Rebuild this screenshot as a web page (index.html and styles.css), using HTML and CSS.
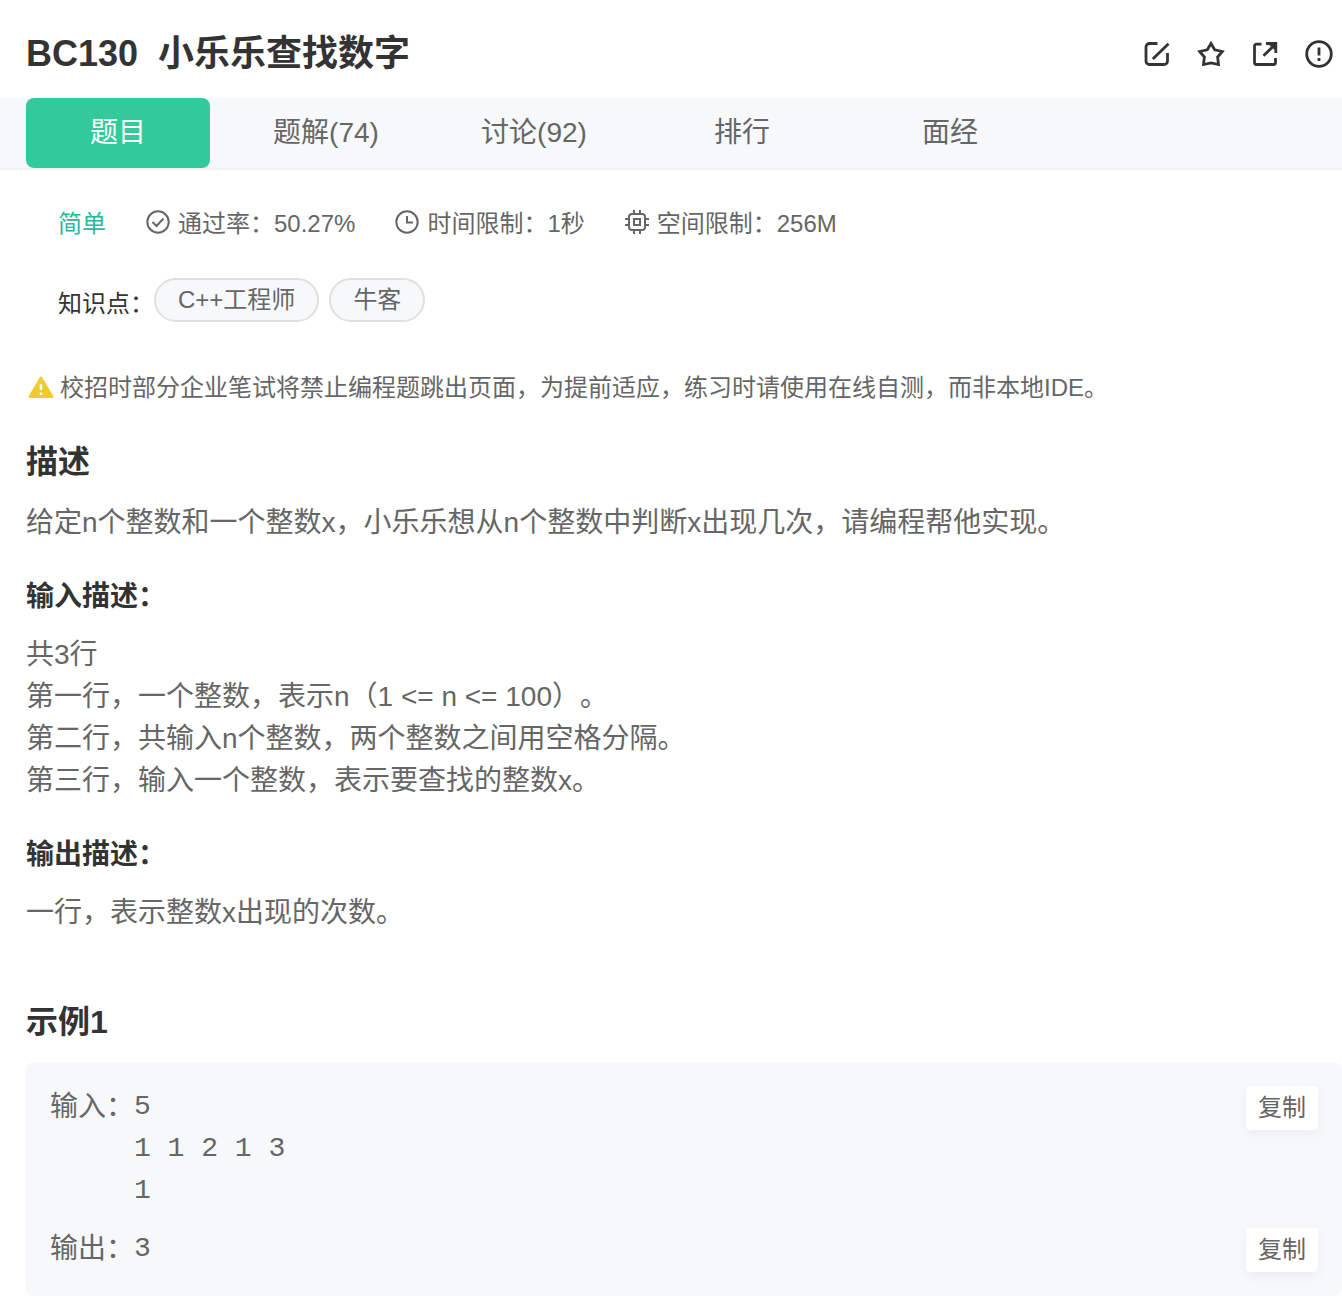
FILE: index.html
```html
<!DOCTYPE html>
<html lang="zh-CN">
<head>
<meta charset="utf-8">
<title>BC130 小乐乐查找数字</title>
<link rel="stylesheet" href="styles.css">
</head>
<body>
<header class="header">
  <h1 class="title"><span>BC130</span><span>小乐乐查找数字</span></h1>
  <div class="actions">
    <button class="icon-button" type="button" aria-label="笔记"><svg viewBox="0 0 28 28"><path d="M14.5 3.5H6.5a3.5 3.5 0 0 0-3.5 3.500v14a3.500 3.500 0 0 0 3.500 3.500h14.500a3.500 3.500 0 0 0 3.500-3.500V13M9.800 19 25.500 3.800"/></svg></button>
    <button class="icon-button" type="button" aria-label="收藏"><svg viewBox="0 0 28 28"><path d="m14 3.500 3.700 6.300 7.600 1.700-4.700 5.500.9 7.500-7.500-1.600-7.500 1.600.9-7.500-4.700-5.500 7.600-1.700z"/></svg></button>
    <button class="icon-button" type="button" aria-label="分享"><svg viewBox="0 0 28 28"><path d="M10.500 4.200H5.500a2 2 0 0 0-2 2v16.300a2 2 0 0 0 2 2h17a2 2 0 0 0 2-2V18M15 3.500H24.800V13M12.500 15.800 24 4.500"/><path class="arrow-head" d="M17 4H25V11z"/></svg></button>
    <button class="icon-button" type="button" aria-label="反馈"><svg viewBox="0 0 28 28"><circle cx="14" cy="14" r="12.300"/><path d="M14 7.500v8M14 18v3"/></svg></button>
  </div>
</header>
<nav class="tabs">
  <a class="tab tab-active" href="#problem">题目</a>
  <a class="tab" href="#solutions">题解(74)</a>
  <a class="tab" href="#discuss">讨论(92)</a>
  <a class="tab" href="#rank">排行</a>
  <a class="tab" href="#interview">面经</a>
</nav>
<main class="content" id="problem">
  <div class="meta">
    <span class="level">简单</span>
    <span class="meta-item"><svg viewBox="0 0 24 24"><circle cx="12" cy="12" r="10.700"/><path d="m6.500 12 4 4 7-7.500"/></svg>通过率：50.27%</span>
    <span class="meta-item"><svg viewBox="0 0 24 24"><circle cx="12" cy="12" r="10.700"/><path d="M12 6v6.500h6"/></svg>时间限制：1秒</span>
    <span class="meta-item"><svg viewBox="0 0 24 24"><rect x="4" y="4" width="16" height="16" rx="3"/><rect x="9" y="9" width="6" height="6"/><path d="M9 0v4M15 0v4M9 20v4M15 20v4M0 9h4M0 15h4M20 9h4M20 15h4"/></svg>空间限制：256M</span>
  </div>
  <div class="topics">
    <span class="topics-label">知识点：</span>
    <a class="tag" href="#cpp">C++工程师</a>
    <a class="tag" href="#nowcoder">牛客</a>
  </div>
  <p class="notice"><svg viewBox="0 0 26 24"><path class="warn-shape" d="M11.700 1.500q1.300-2 2.600 0l10.900 18.600q.9 1.900-1.100 1.900H1.900q-2 0-1.100-1.900z"/><path class="warn-mark" d="M13 8v6M13 16.500v2.500"/></svg>校招时部分企业笔试将禁止编程题跳出页面，为提前适应，练习时请使用在线自测，而非本地IDE。</p>
  <section class="section">
    <h2 class="heading">描述</h2>
    <p>给定n个整数和一个整数x，小乐乐想从n个整数中判断x出现几次，请编程帮他实现。</p>
  </section>
  <section class="section">
    <h3 class="subheading">输入描述：</h3>
    <p>共3行<br>第一行，一个整数，表示n（1 &lt;= n &lt;= 100）。<br>第二行，共输入n个整数，两个整数之间用空格分隔。<br>第三行，输入一个整数，表示要查找的整数x。</p>
  </section>
  <section class="section">
    <h3 class="subheading">输出描述：</h3>
    <p>一行，表示整数x出现的次数。</p>
  </section>
  <section class="example">
    <h2 class="heading">示例1</h2>
    <div class="sample">
      <div class="sample-row"><span>输入：</span><pre>5
1 1 2 1 3
1</pre><button class="copy" type="button">复制</button></div>
      <div class="sample-row"><span>输出：</span><pre>3</pre><button class="copy" type="button">复制</button></div>
    </div>
  </section>
</main>
</body>
</html>
```
FILE: styles.css
```css
* {
  box-sizing: border-box;
}

body {
  margin: 0;
  background: #fff;
  color: #666;
  font: 28px/42px "Liberation Sans", "Noto Sans CJK SC", sans-serif;
  text-spacing-trim: space-all;
}

h1, h2, h3, p, pre {
  margin: 0;
}

a {
  color: inherit;
  text-decoration: none;
}

button {
  padding: 0;
  border: 0;
  color: inherit;
  font: inherit;
  cursor: pointer;
}

svg {
  flex: none;
  fill: none;
  stroke: currentColor;
}

.header {
  display: flex;
  align-items: center;
  justify-content: space-between;
  padding: 27px 9px 17px 26px;
  color: #333;
}

.title {
  display: flex;
  gap: 20px;
  font-size: 36px;
  line-height: 54px;
}

.actions {
  display: flex;
  gap: 26px;
}

.icon-button {
  width: 28px;
  height: 28px;
  background: none;
}

.icon-button svg {
  display: block;
  stroke-width: 2.8;
}

.arrow-head {
  fill: currentColor;
  stroke: none;
}

.tabs {
  display: flex;
  gap: 24px;
  padding-left: 26px;
  border-bottom: 2px solid #f0f2f5;
  background: #f7f8fa;
}

.tab {
  width: 184px;
  border-radius: 8px;
  line-height: 70px;
  text-align: center;
}

.tab-active {
  background: #32ca99;
  color: #fff;
}

.content {
  padding-left: 26px;
}

.meta {
  display: flex;
  gap: 40px;
  padding: 36px 32px 0;
  font-size: 24px;
  line-height: 36px;
}

.level {
  color: #25bb9b;
}

.meta-item {
  display: flex;
  gap: 8px;
}

.meta svg {
  width: 24px;
  height: 24px;
  margin-top: 4px;
  stroke-width: 2;
}

.topics {
  display: flex;
  gap: 10px;
  padding: 36px 32px 0;
  font-size: 24px;
  line-height: 40px;
}

.topics-label {
  margin-right: -10px;
  padding-top: 6px;
  color: #333;
}

.tag {
  height: 44px;
  padding: 0 22px;
  border: 2px solid #e0e0e0;
  border-radius: 22px;
  background: #f7f8fa;
}

.notice {
  display: flex;
  align-items: center;
  gap: 6px;
  padding: 46px 0 32px 2px;
  font-size: 24px;
  line-height: 36px;
}

.notice svg {
  width: 26px;
  height: 24px;
}

.warn-shape {
  fill: #f3ca2c;
  stroke: none;
}

.warn-mark {
  stroke: #fff;
  stroke-width: 2.4;
}

.heading {
  color: #333;
  font-size: 32px;
  line-height: 48px;
}

.subheading {
  color: #333;
  font-size: 28px;
  line-height: 42px;
}

.section {
  display: grid;
  gap: 16px;
  margin-bottom: 32px;
}

.example {
  display: grid;
  gap: 16px;
  padding-top: 32px;
}

.sample {
  display: grid;
  gap: 16px;
  padding: 24px;
  border-radius: 8px;
  background: #f7f8fa;
}

.sample-row {
  display: flex;
  align-items: flex-start;
}

.sample pre {
  flex: 1;
  font-family: "Liberation Mono", monospace;
}

.copy {
  width: 72px;
  border-radius: 4px;
  background: #fff;
  box-shadow: 0 4px 12px rgba(0, 0, 0, 0.05);
  font-size: 24px;
  line-height: 44px;
}
```
